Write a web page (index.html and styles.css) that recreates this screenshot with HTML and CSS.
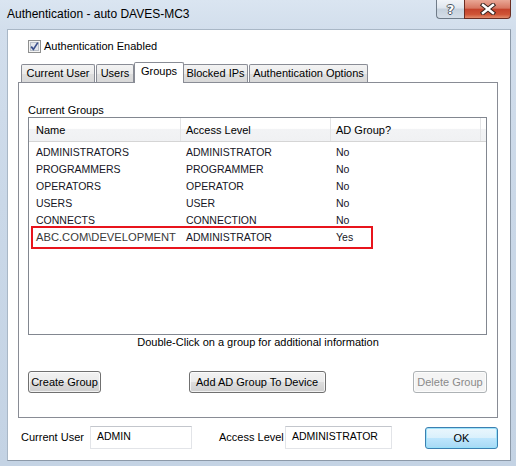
FILE: index.html
```html
<!DOCTYPE html>
<html>
<head>
<meta charset="utf-8">
<link rel="stylesheet" href="styles.css">
</head>
<body>
<div class="window">
  <div class="titlebar">
    <span class="title">Authentication - auto DAVES-MC3</span>
    <div class="caption-btns">
      <div class="cap help">?</div>
      <div class="cap close">
        <svg width="16" height="12" viewBox="0 0 16 12">
          <path d="M3 2 L13 10 M13 2 L3 10" stroke="#3a2520" stroke-width="4.4" stroke-linecap="square" fill="none"/>
          <path d="M3 2 L13 10 M13 2 L3 10" stroke="#ffffff" stroke-width="2.4" stroke-linecap="square" fill="none"/>
        </svg>
      </div>
    </div>
  </div>
  <div class="client">
    <div class="check-row">
      <span class="checkbox">
        <svg width="13" height="13" viewBox="0 0 13 13">
          <rect x="0.5" y="0.5" width="12" height="12" fill="#f4f4f4" stroke="#8e8f8f"/>
          <rect x="2.5" y="2.5" width="8" height="8" fill="#e3e6ec" stroke="#b9bfc8"/>
          <path d="M3.2 6.6 L5.4 9.4 L9.8 2.6" stroke="#3a4f8c" stroke-width="1.7" fill="none"/>
        </svg>
      </span>
      <span class="check-label">Authentication Enabled</span>
    </div>
    <div class="tabs">
      <div class="tab t-user">Current User</div>
      <div class="tab t-users">Users</div>
      <div class="tab selected t-groups">Groups</div>
      <div class="tab t-blocked">Blocked IPs</div>
      <div class="tab t-opts">Authentication Options</div>
    </div>
    <div class="panel">
      <div class="group-label">Current Groups</div>
      <div class="listview">
        <div class="lv-header">
          <div class="col c1">Name</div>
          <div class="col c2">Access Level</div>
          <div class="col c3">AD Group?</div>
          <div class="col c4"></div>
        </div>
        <div class="lv-body">
          <div class="lv-row"><span class="c1">ADMINISTRATORS</span><span class="c2">ADMINISTRATOR</span><span class="c3">No</span></div>
          <div class="lv-row"><span class="c1">PROGRAMMERS</span><span class="c2">PROGRAMMER</span><span class="c3">No</span></div>
          <div class="lv-row"><span class="c1">OPERATORS</span><span class="c2">OPERATOR</span><span class="c3">No</span></div>
          <div class="lv-row"><span class="c1">USERS</span><span class="c2">USER</span><span class="c3">No</span></div>
          <div class="lv-row"><span class="c1">CONNECTS</span><span class="c2">CONNECTION</span><span class="c3">No</span></div>
          <div class="lv-row highlighted"><span class="c1 big">ABC.COM\DEVELOPMENT</span><span class="c2">ADMINISTRATOR</span><span class="c3">Yes</span><span class="red-box"></span></div>
        </div>
      </div>
      <div class="hint">Double-Click on a group for additional information</div>
      <div class="btn-row">
        <div class="btn b-create">Create Group</div>
        <div class="btn b-add">Add AD Group To Device</div>
        <div class="btn disabled b-delete">Delete Group</div>
      </div>
    </div>
    <div class="footer">
      <span class="f-label l-user">Current User</span>
      <div class="input i-user">ADMIN</div>
      <span class="f-label l-level">Access Level</span>
      <div class="input i-level">ADMINISTRATOR</div>
      <div class="btn default b-ok">OK</div>
    </div>
  </div>
</div>
</body>
</html>
```

FILE: styles.css
```css
* { box-sizing: border-box; }
html, body { margin: 0; padding: 0; }
body {
  font-family: "Liberation Sans", Arial, sans-serif;
  font-size: 11px;
  color: #000;
  background: #cfdbe8;
}
.window {
  width: 516px;
  height: 466px;
  padding: 0 5px 5px 7px;
  background: linear-gradient(to bottom, #dae5f1 0px, #d2deec 30px, #cad8e8 200px, #c4d3e4 466px);
}
.titlebar {
  height: 29px;
  display: flex;
  justify-content: space-between;
  align-items: flex-start;
}
.title {
  font-size: 12px;
  line-height: 16px;
  padding-top: 6px;
  color: #000;
}
.caption-btns { display: flex; }
.cap {
  height: 19px;
  display: flex;
  align-items: center;
  justify-content: center;
}
.help {
  width: 28px;
  border: 1px solid #6f7b88;
  border-top: none;
  border-right: none;
  border-radius: 0 0 0 4px;
  background: linear-gradient(to bottom, #f1f4f8 0%, #dfe6ee 45%, #c6d1dd 50%, #d5dee8 100%);
  color: #fff;
  font-family: "DejaVu Sans", sans-serif;
  font-weight: bold;
  font-size: 13px;
  text-shadow: -1px 0 #4a5360, 1px 0 #4a5360, 0 -1px #4a5360, 0 1px #4a5360;
}
.close {
  width: 47px;
  border: 1px solid #6b2d22;
  border-top: none;
  border-radius: 0 0 4px 0;
  background: linear-gradient(to bottom, #e9a796 0%, #d77762 45%, #c4432c 52%, #cf5436 80%, #e28c6c 100%);
}
.client {
  width: 504px;
  height: 432px;
  background: #fff;
  border: 1px solid #8c99a8;
  border-left-color: #a9b7c6;
  border-top-color: #a9b7c6;
}
.check-row {
  margin: 10px 0 0 20px;
  height: 13px;
  display: flex;
  align-items: center;
}
.checkbox { width: 13px; height: 13px; display: block; }
.checkbox svg { display: block; }
.check-label { margin-left: 3px; line-height: 13px; }
.tabs {
  margin: 9px 0 0 13px;
  height: 20px;
  display: flex;
  align-items: flex-end;
}
.tab {
  height: 18px;
  line-height: 16px;
  padding: 0;
  white-space: nowrap;
  text-align: center;
  border: 1px solid #898c95;
  border-bottom: none;
  border-radius: 2px 2px 0 0;
  background: linear-gradient(to bottom, #f3f3f3 0%, #ebebeb 50%, #dedede 50%, #d9d9d9 100%);
  margin-right: 1px;
}
.t-user { width: 74px; }
.t-users { width: 38px; }
.t-blocked { width: 65px; }
.t-opts { width: 119px; }
.tab.selected {
  position: relative;
  z-index: 2;
  height: 21px;
  margin: 0 -1px -1px -1px;
  width: 50px;
  line-height: 17px;
  background: #fff;
}
.panel {
  margin-left: 10px;
  width: 480px;
  height: 336px;
  border: 1px solid #898c95;
  background: #fff;
  padding-top: 21px;
}
.group-label {
  margin-left: 9px;
  line-height: 13px;
}
.listview {
  margin-left: 9px;
  width: 459px;
  height: 218px;
  border: 1px solid #828790;
}
.lv-header {
  display: flex;
  height: 24px;
  border-bottom: 1px solid #d5d5d5;
  background: linear-gradient(to bottom, #ffffff 0%, #ffffff 45%, #f2f3f5 50%, #f0f1f3 100%);
}
.lv-header .col {
  line-height: 23px;
  padding-top: 1px;
  border-right: 1px solid #e3e4e6;
}
.c1 { width: 152px; padding-left: 7px; }
.c2 { width: 150px; padding-left: 5px; }
.c3 { width: 150px; padding-left: 5px; }
.lv-header .c4 { flex: 1; border-right: none; }
.lv-body { padding-top: 2px; }
.lv-row {
  position: relative;
  display: flex;
  height: 17px;
  line-height: 17px;
  font-size: 10.5px;
  color: #161626;
}
.lv-row span { display: block; white-space: nowrap; }
.lv-row .big { font-size: 11.2px; color: #3a3a3a; }
.red-box {
  position: absolute;
  left: 2px;
  top: -3px;
  width: 342px;
  height: 23px;
  border: 2px solid #e8141c;
}
.hint {
  text-align: center;
  line-height: 14px;
  margin-top: 0;
}
.btn-row {
  margin-top: 22px;
  padding: 0 10px 0 9px;
  display: flex;
  justify-content: space-between;
}
.btn {
  height: 22px;
  line-height: 20px;
  text-align: center;
  border: 1px solid #707070;
  border-radius: 3px;
  background: linear-gradient(to bottom, #f2f2f2 0%, #ebebeb 50%, #dddddd 50%, #cfcfcf 100%);
  box-shadow: inset 0 0 0 1px rgba(255, 255, 255, 0.7);
  white-space: nowrap;
}
.b-create { width: 73px; }
.b-add { width: 137px; }
.b-delete { width: 74px; }
.btn.disabled {
  border-color: #adb2b5;
  background: #f4f4f4;
  color: #8a8a8a;
}
.footer {
  margin-top: 8px;
  display: flex;
  align-items: center;
  height: 23px;
}
.f-label { line-height: 13px; white-space: nowrap; }
.l-user { margin-left: 13px; width: 69px; }
.l-level { margin-left: 27px; width: 66px; }
.input {
  height: 23px;
  border: 1px solid #e2e4e8;
  border-top-color: #c3c6cc;
  padding: 3px 0 0 6px;
  font-size: 10.5px;
  line-height: 13px;
  align-self: flex-start;
}
.i-user { width: 102px; }
.i-level { width: 107px; }
.b-ok {
  width: 73px;
  margin-left: 33px;
  margin-top: 1px;
  border-color: #3c7fb1;
  background: linear-gradient(to bottom, #eaf6fd 0%, #d9f0fc 50%, #bee6fd 50%, #a7d9f5 100%);
  box-shadow: inset 0 0 0 1px rgba(150, 225, 250, 0.9);
}
```
